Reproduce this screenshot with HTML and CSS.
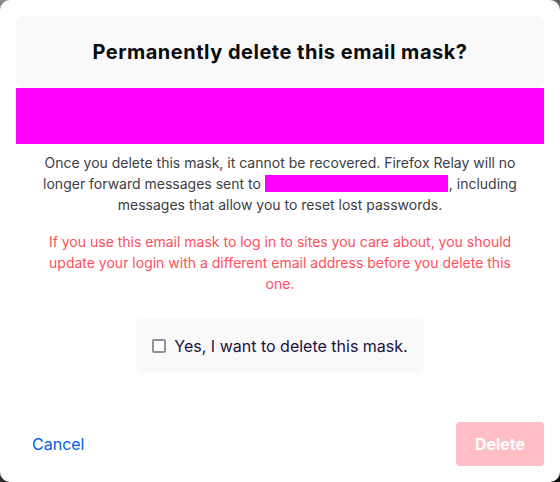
FILE: index.html
```html
<!DOCTYPE html>
<html lang="en">
<head>
<meta charset="utf-8">
<title>Delete mask</title>
<link rel="stylesheet" href="styles.css">
</head>
<body>
<div class="modal">
  <div class="header">
    <h2 class="title">Permanently delete this email mask?</h2>
  </div>
  <div class="mask-bar"></div>
  <div class="content">
    <p class="warning">Once you delete this mask, it cannot be recovered. Firefox Relay will no longer forward messages sent to <span class="mask-inline"></span>, including messages that allow you to reset lost passwords.</p>
    <p class="alert">If you use this email mask to log in to sites you care about, you should update your login with a different email address before you delete this one.</p>
    <label class="confirm">
      <span class="checkbox"></span>
      <span class="confirm-text">Yes, I want to delete this mask.</span>
    </label>
  </div>
  <div class="footer">
    <button class="cancel">Cancel</button>
    <button class="delete">Delete</button>
  </div>
</div>
</body>
</html>
```
FILE: styles.css
```css
html, body {
  margin: 0;
  padding: 0;
}
body {
  width: 560px;
  height: 482px;
  background: linear-gradient(160deg, #8a8a8a 0%, #3a3a3a 60%, #0c0c0c 100%);
  font-family: Inter, "Noto Sans", sans-serif;
  overflow: hidden;
}
.modal {
  box-sizing: border-box;
  width: 560px;
  height: 482px;
  background: #fff;
  border-radius: 10px;
  padding: 16px;
  display: flex;
  flex-direction: column;
}
.header {
  background: #f9f9fa;
  border-radius: 8px;
  height: 72px;
  display: flex;
  align-items: center;
  justify-content: center;
}
.title {
  margin: 0;
  font-size: 20px;
  font-weight: 700;
  color: #0c0c0d;
  letter-spacing: 0.5px;
}
.mask-bar {
  height: 56px;
  background: #ff00ff;
}
.content {
  padding: 8px 16px 0;
  display: flex;
  flex-direction: column;
  align-items: center;
}
.warning, .alert {
  margin: 0;
  text-align: center;
  font-size: 14px;
  line-height: 21px;
}
.warning {
  color: #3d3d42;
}
.mask-inline {
  display: inline-block;
  width: 183px;
  height: 17px;
  margin-right: 1px;
  background: #ff00ff;
  vertical-align: -3px;
}
.alert {
  color: #ff4f5e;
  margin-top: 16px;
  max-width: 466px;
}
.confirm {
  margin-top: 24px;
  width: 288px;
  height: 55px;
  box-sizing: border-box;
  background: #f9f9fa;
  border-radius: 8px;
  display: flex;
  align-items: center;
  justify-content: center;
  gap: 8px;
}
.checkbox {
  width: 10px;
  height: 10px;
  border: 2px solid #8f8f9d;
  border-radius: 2px;
  background: #fff;
}
.confirm-text {
  font-size: 16px;
  color: #20123a;
}
.footer {
  margin-top: auto;
  display: flex;
  align-items: center;
  justify-content: space-between;
}
.cancel {
  background: none;
  border: none;
  padding: 0 16px;
  font-family: Inter, sans-serif;
  font-size: 16px;
  color: #0060df;
}
.delete {
  width: 88px;
  height: 44px;
  border: none;
  border-radius: 4px;
  background: #ffbdc5;
  color: #fff;
  font-family: Inter, sans-serif;
  font-size: 16px;
  font-weight: 700;
}
```
